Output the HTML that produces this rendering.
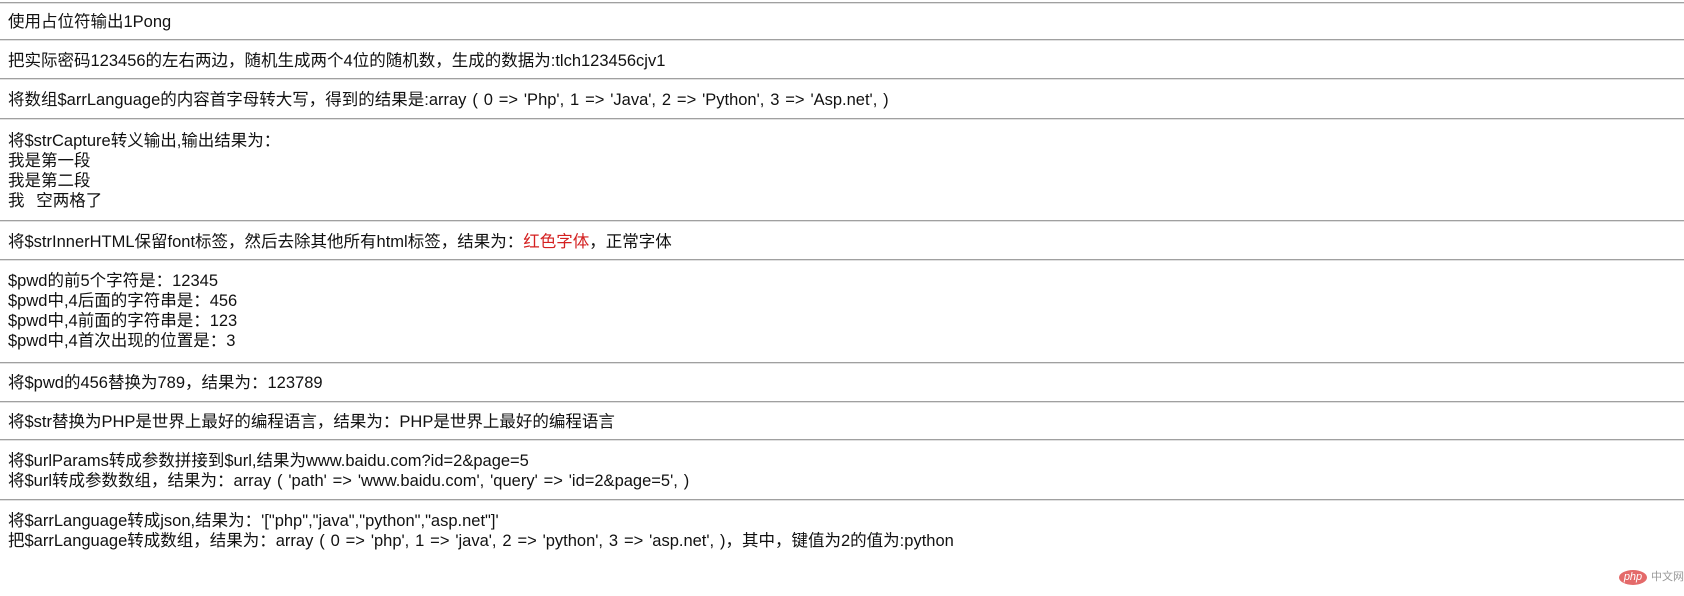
<!DOCTYPE html>
<html><head><meta charset="utf-8"><style>
body{margin:0;width:1684px;height:596px;background:#fff;position:relative;overflow:hidden}
.l{position:absolute;left:0;width:1684px;height:1px;background:#a0a0a0;border-bottom:1px solid #e0e0e0}
.s{position:absolute;left:0;top:0;width:1684px}
.t{position:absolute;left:8px;font-family:"Liberation Sans","Noto Sans CJK SC",sans-serif;font-size:16.5px;line-height:20px;color:#111;white-space:pre;word-spacing:1.3px}
.r{color:#d42020}
</style></head><body>
<div class="l" style="top:2px"></div>
<div class="l" style="top:39px"></div>
<div class="l" style="top:78px"></div>
<div class="l" style="top:118px"></div>
<div class="l" style="top:220px"></div>
<div class="l" style="top:259px"></div>
<div class="l" style="top:362px"></div>
<div class="l" style="top:401px"></div>
<div class="l" style="top:439px"></div>
<div class="l" style="top:499px"></div>
<div class="s">
<div class="t" style="top:12px">使用占位符输出1Pong</div>
<div class="t" style="top:51px">把实际密码123456的左右两边，随机生成两个4位的随机数，生成的数据为:tlch123456cjv1</div>
<div class="t" style="top:90px">将数组$arrLanguage的内容首字母转大写，得到的结果是:array ( 0 =&gt; 'Php', 1 =&gt; 'Java', 2 =&gt; 'Python', 3 =&gt; 'Asp.net', )</div>
<div class="t" style="top:131px">将$strCapture转义输出,输出结果为：
我是第一段
我是第二段
我  空两格了</div>
<div class="t" style="top:232px">将$strInnerHTML保留font标签，然后去除其他所有html标签，结果为：<span class="r">红色字体</span>，正常字体</div>
<div class="t" style="top:271px">$pwd的前5个字符是：12345
$pwd中,4后面的字符串是：456
$pwd中,4前面的字符串是：123
$pwd中,4首次出现的位置是：3</div>
<div class="t" style="top:373px">将$pwd的456替换为789，结果为：123789</div>
<div class="t" style="top:412px">将$str替换为PHP是世界上最好的编程语言，结果为：PHP是世界上最好的编程语言</div>
<div class="t" style="top:451px">将$urlParams转成参数拼接到$url,结果为www.baidu.com?id=2&amp;page=5
将$url转成参数数组，结果为：array ( 'path' =&gt; 'www.baidu.com', 'query' =&gt; 'id=2&amp;page=5', )</div>
<div class="t" style="top:511px">将$arrLanguage转成json,结果为：'["php","java","python","asp.net"]'
把$arrLanguage转成数组，结果为：array ( 0 =&gt; 'php', 1 =&gt; 'java', 2 =&gt; 'python', 3 =&gt; 'asp.net', )，其中，键值为2的值为:python</div>
</div>
<div style="position:absolute;left:1619px;top:570px;width:28px;height:15px;border-radius:50%;background:#e46a6a;color:#fff;font:italic 11px/15px 'Liberation Sans',sans-serif;text-align:center">php</div>
<div style="position:absolute;left:1651px;top:570px;font:11px/15px 'Liberation Sans','Noto Sans CJK SC',sans-serif;color:#999">中文网</div>
</body></html>
